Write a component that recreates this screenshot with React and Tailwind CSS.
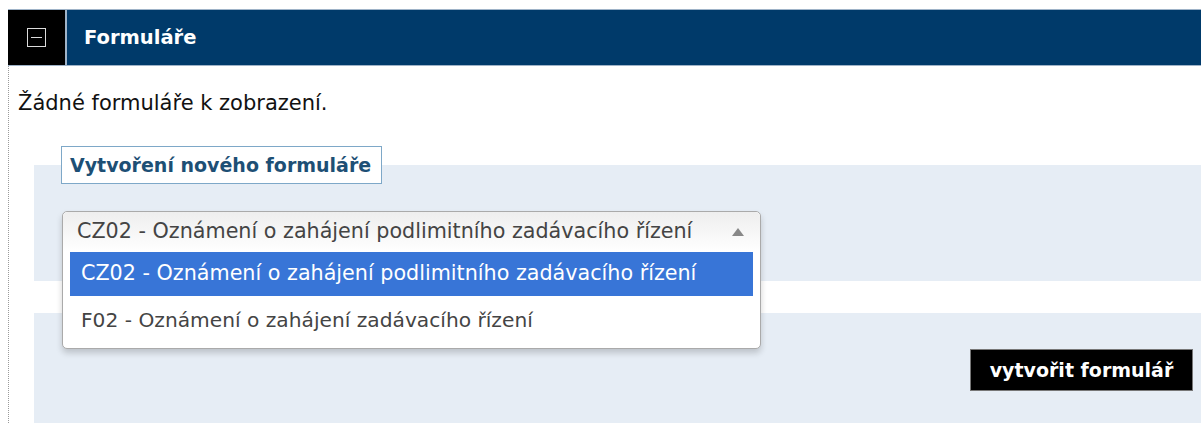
import { useState } from 'react';

const options = [
    'CZ02 - Oznámení o zahájení podlimitního zadávacího řízení',
    'F02 - Oznámení o zahájení zadávacího řízení',
];

const FormsPanel = () => {
    const [selected, setSelected] = useState(0);
    const [hovered, setHovered] = useState(0);

    return (
        <div className="h-[423px] w-full overflow-hidden bg-white pl-[8px] pt-[9px] font-['DejaVu_Sans',sans-serif]">
            {/* section header */}
            <div className="flex h-[57px] border-y border-[#9fb3c8] bg-[#9fb3c8]">
                <div className="flex w-[57px] items-center justify-center bg-black">
                    <div className="flex h-[19px] w-[19px] items-center justify-center border-[1.5px] border-[#dcdcdc]">
                        <div className="h-[1.5px] w-[11px] bg-[#dcdcdc]"></div>
                    </div>
                </div>
                <div className="ml-[2px] flex flex-1 items-center bg-[#003a6a] pl-[17px] text-[19.5px] font-bold text-white">
                    Formuláře
                </div>
            </div>

            <div className="border-l border-dotted border-[#9a9a9a] pt-[25px]">
                <p className="pl-[9px] text-[21px] leading-[24px] text-[#111]">Žádné formuláře k zobrazení.</p>

                <div className="ml-[25px] mt-[31px]">
                    <div className="relative z-10 -mb-[19px] ml-[27px] w-fit border border-[#7ea8c8] bg-white py-[6px] pl-[8px] pr-[10px] text-[19px] font-bold leading-[24px] text-[#1d4f75]">
                        Vytvoření nového formuláře
                    </div>

                    <div className="h-[116px] bg-[#e6edf5] pl-[28px] pt-[46px]">
                        <div className="relative z-20 h-[40px] w-[699px]">
                            <div className="absolute left-0 top-0 w-full rounded-[5px] border border-[#aaa] bg-white shadow-[0_4px_6px_rgba(0,0,0,0.18)]">
                                <div className="flex h-[40px] items-center justify-between rounded-t-[5px] bg-gradient-to-b from-[#eee] to-white pl-[14px] pr-[16px] text-[20.7px] text-[#444]">
                                    <span>{options[selected]}</span>
                                    <svg width="12" height="8" viewBox="0 0 12 8">
                                        <path d="M6 0 L12 8 L0 8 Z" fill="#888" />
                                    </svg>
                                </div>
                                <ul className="px-[7px] pb-[3px]">
                                    {options.map((o, i) => (
                                        <li
                                            key={o}
                                            onMouseEnter={() => setHovered(i)}
                                            onClick={() => setSelected(i)}
                                            className={
                                                i === hovered
                                                    ? 'flex h-[44px] items-center bg-[#3875d7] pl-[11px] text-[20.7px] text-white'
                                                    : 'flex h-[49px] items-center pl-[11px] text-[20.2px] text-[#444]'
                                            }
                                        >
                                            {o}
                                        </li>
                                    ))}
                                </ul>
                            </div>
                        </div>
                    </div>

                    <div className="mt-[32px] flex h-[120px] items-start justify-end bg-[#e6edf5] pr-[8px] pt-[36px]">
                        <button className="h-[42px] w-[223px] border border-[#777] bg-black text-[19px] font-bold text-white">
                            vytvořit formulář
                        </button>
                    </div>
                </div>
            </div>
        </div>
    );
};

export default FormsPanel;
